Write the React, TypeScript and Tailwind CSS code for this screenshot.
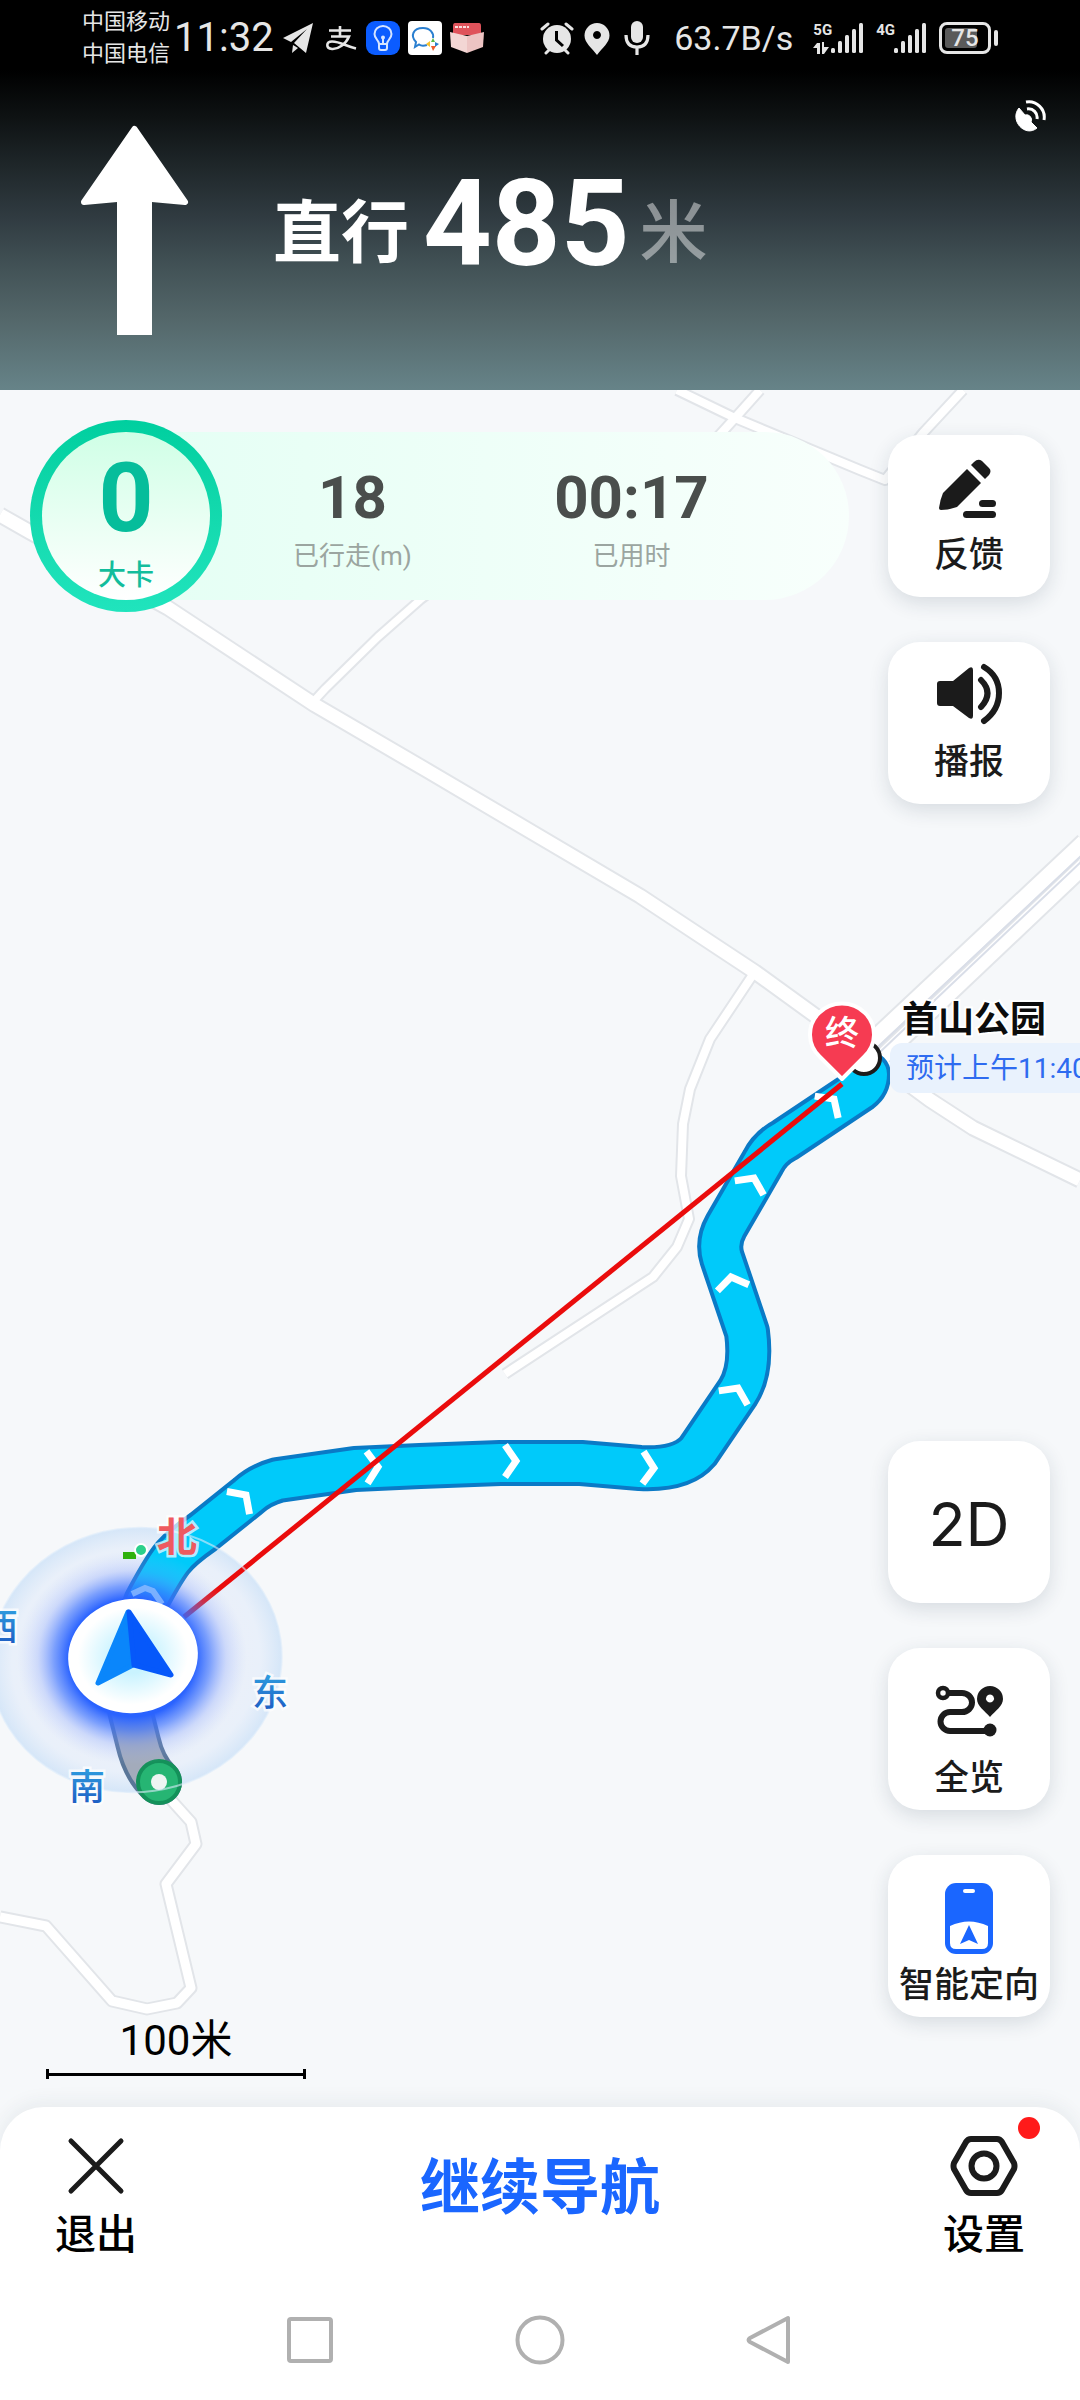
import type { ReactNode } from "react";

const ROADS = [
  { d: "M0 515 L30 532 L168 608 L315 705 L428 771 L640 896 L755 972 L842 1035 L930 1100 L973 1128 L1080 1180", w: 13 },
  { d: "M312 703 L325 689 L378 637 L420 600 L500 540", w: 7 },
  { d: "M677 390 L735 418 L860 470 L885 480 L923 433 L963 390", w: 8 },
  { d: "M760 390 L735 418 L715 440", w: 8 },
  { d: "M752 976 L710 1039 L690 1089 L683 1124 L681 1176 L689 1219 L677 1247 L653 1277 L505 1374", w: 8 },
  { d: "M159 1782 L173 1802 L191 1822 L196 1844 L166 1884 L191 1988 L177 2003 L147 2009 L112 2001 L46 1926 L0 1917", w: 9 },
  { d: "M862 1050 L1084 842", w: 15 },
  { d: "M877 1062 L1084 866", w: 15 },
];

const ROUTE =
  "M130 1650 L146 1602 Q162 1572 171 1560 T203 1532 L248 1496 Q260 1485 278 1480 L355 1469 L420 1466 L500 1463 L581 1463 L640 1468 Q682 1470 698 1451 L738 1392 Q752 1370 747 1332 L722 1258 Q717 1242 726 1226 L763 1162 Q770 1148 785 1140 L860 1090 Q868 1084 868 1074";
const PASSED = "M127 1690 L130 1710 L138 1742 Q144 1768 159 1782";

// tip x, tip y, heading
const CHEVRONS = [
  [246, 1495, 45],
  [378, 1467, 88],
  [516, 1461, 90],
  [654, 1468, 92],
  [738, 1388, 26],
  [731, 1277, -11],
  [754, 1178, 26],
  [834, 1099, 43],
];

function StatusBar() {
  return (
    <div className="flex h-19 items-center justify-between px-[82px] text-[#e6e6e6]">
      <div className="flex items-center gap-2">
        <div className="text-[22px] leading-8">
          <div>中国移动</div>
          <div>中国电信</div>
        </div>
        <time className="-ml-1 text-[40px] leading-12">11:32</time>
        <svg className="h-[34px] w-[34px]" viewBox="0 0 34 34">
          <path d="M31 2 L1 17 L9 21 L25 8 L12 22 L24 32 Z" fill="currentColor" />
          <path d="M11 24 L10 32 L16 27 Z" fill="currentColor" />
        </svg>
        <svg className="h-[34px] w-[34px]" viewBox="0 0 34 34" fill="none" stroke="currentColor" strokeWidth="2.6">
          <path d="M5 9.500 H27 M16 5 V15.500 M7 15.500 H25 C22 23 14 28.500 8 28 C1.500 27.500 2 20.500 8 20.500 C16 20.500 22 25 32 27.500" />
        </svg>
        <svg className="h-[34px] w-[34px]" viewBox="0 0 34 34">
          <rect width="34" height="34" rx="9" fill="#0b5cff" />
          <g fill="none" stroke="#d5e4ff" strokeWidth="2">
            <path d="M13 23 C13 19 8.500 18 8.500 13 A8.500 8 0 0 1 25.500 13 C25.500 18 21 19 21 23 Z" />
            <path d="M13 23 V27 Q13 29 15 29 H19 Q21 29 21 27 V23 M17 23 V17" />
          </g>
          <circle cx="17" cy="16.500" r="2" fill="#d5e4ff" />
        </svg>
        <svg className="h-[34px] w-[34px]" viewBox="0 0 34 34">
          <rect width="34" height="34" rx="4" fill="#fff" />
          <path d="M19 24 C16 25 13 25 11 23.500 L7 26 L8 21 C2 15 5 7 15 7 C22 7 26 12 25 17" fill="none" stroke="#2a7fd0" strokeWidth="2" />
          <path d="M25 17 L27 21 L23 21 Z" fill="#58b947" />
          <path d="M31 23 L27 26 L27 21 Z" fill="#2a7fd0" />
          <path d="M25 30 L23 25 L28 25 Z" fill="#ef5b2e" />
          <path d="M18 23 L22 20 L22 26 Z" fill="#f8c12c" />
        </svg>
        <svg className="h-[34px] w-[34px]" viewBox="0 0 34 34">
          <path d="M5 2 H29 Q31 2 31 5 V14 H3 V5 Q3 2 5 2" fill="#df535b" />
          <path d="M0 11 L17 15 V32 L1 26 Z" fill="#f3d6d4" />
          <path d="M34 11 L17 15 V32 L33 26 Z" fill="#edc4c3" />
          <path d="M5 6 h14" stroke="#fbdcdc" strokeWidth="2" strokeDasharray="3 1" />
        </svg>
      </div>

      <div className="flex items-center">
        <div className="flex gap-1.5">
          <svg className="h-[34px] w-[34px]" viewBox="0 0 34 34">
            <circle cx="17" cy="18" r="14" fill="currentColor" />
            <path d="M2 8 L8 3 M32 8 L26 3 M6 32 L10 28 M28 32 L24 28" stroke="currentColor" strokeWidth="3" strokeLinecap="round" />
            <path d="M16.500 10 V19 L23 25" fill="none" stroke="#000" strokeWidth="3" />
          </svg>
          <svg className="h-[34px] w-[34px]" viewBox="0 0 34 34">
            <path fillRule="evenodd" d="M17 2 A12.500 12.500 0 0 1 29.500 14.500 C29.500 22 22 27 17 34 C12 27 4.500 22 4.500 14.500 A12.500 12.500 0 0 1 17 2 M17 10 a4 4 0 1 0 0.010 0" fill="currentColor" />
          </svg>
          <svg className="h-[34px] w-[34px]" viewBox="0 0 34 34">
            <rect x="11" y="0" width="12" height="22" rx="6" fill="currentColor" />
            <path d="M6 14 Q6 26 17 26 Q28 26 28 14 M17 26 V34" fill="none" stroke="currentColor" strokeWidth="3.200" />
          </svg>
        </div>
        <span className="mr-2 ml-5 text-[34px] leading-10">63.7B/s</span>
        <Signal label="5G" active />
        <Signal label="4G" />
        <div className="ml-3 flex items-center gap-[3px]">
          <div className="relative flex h-8 w-[52px] items-center justify-center rounded-[8px] border-3 border-[#e6e6e6]">
            <div className="absolute inset-y-[3px] left-[3px] w-8 rounded-[3px] bg-[#5a5a5a]" />
            <span className="relative text-2xl leading-6 font-medium">75</span>
          </div>
          <div className="h-4 w-1 rounded-sm bg-[#e6e6e6]" />
        </div>
      </div>
    </div>
  );
}

function Signal({ label, active }: { label: string; active?: boolean }) {
  return (
    <div className="ml-3 flex h-8 items-start">
      <div className="flex flex-col">
        <span className="text-[15px] leading-4 font-bold">{label}</span>
        {active && (
          <svg className="mt-1 h-3 w-4" viewBox="0 0 16 12" fill="currentColor">
            <path d="M0 6 L4 1 H7 V12 H4 V6 Z M9 0 H11 V5 H16 L11 12 H9 Z" />
          </svg>
        )}
      </div>
      <svg className="-ml-px h-8 w-[33px]" viewBox="0 0 33 32" fill="currentColor">
        <rect x="0" y="26" width="4" height="5" rx="1.500" />
        <rect x="7" y="19" width="4" height="12" rx="1.500" />
        <rect x="14" y="13" width="4" height="18" rx="1.500" />
        <rect x="21" y="7" width="4" height="24" rx="1.500" />
        <rect x="28" y="1" width="4" height="30" rx="1.500" />
      </svg>
    </div>
  );
}

function MapCanvas() {
  return (
    <svg
      className="absolute inset-0 h-full w-full"
      viewBox="0 390 1080 1757"
      preserveAspectRatio="xMidYMid slice"
      role="img"
      aria-label="地图"
    >
      <defs>
        <radialGradient id="halo">
          <stop offset="0.500" stopColor="#e6ebf8" stopOpacity="0.600" />
          <stop offset="0.850" stopColor="#e6eefa" stopOpacity="0.800" />
          <stop offset="1" stopColor="#d5e6f8" />
        </radialGradient>
        <radialGradient id="glow">
          <stop offset="0.550" stopColor="#2a63ff" />
          <stop offset="0.680" stopColor="#3f74ff" stopOpacity="0.650" />
          <stop offset="0.820" stopColor="#7294ff" stopOpacity="0.250" />
          <stop offset="1" stopColor="#a9c0ff" stopOpacity="0" />
        </radialGradient>
        <radialGradient id="disc">
          <stop offset="0.300" stopColor="#c9f3ff" />
          <stop offset="0.850" stopColor="#fff" />
        </radialGradient>
        <linearGradient id="compass" x1="0" y1="0" x2="0" y2="1">
          <stop offset="0" stopColor="#2f9fe0" />
          <stop offset="1" stopColor="#1c55c0" />
        </linearGradient>
      </defs>

      <g fill="none" strokeLinejoin="round">
        {ROADS.map((r) => (
          <path key={r.d} d={r.d} stroke="#e2e5e9" strokeWidth={r.w + 4} />
        ))}
        {ROADS.map((r) => (
          <path key={r.d} d={r.d} stroke="#fff" strokeWidth={r.w} />
        ))}
      </g>
      <path d="M877 1048 L1084 853" stroke="#d9dee8" strokeWidth="2" />
      <path d="M880 1052 L1084 859" stroke="#d9dee8" strokeWidth="2" />

      <ellipse cx="136" cy="1660" rx="146" ry="132" transform="rotate(-8 136 1660)" fill="url(#halo)" />

      {/* route */}
      <g fill="none" strokeLinecap="round" strokeLinejoin="round">
        <path d={PASSED} stroke="#5a7698" strokeWidth="46" />
        <path d={PASSED} stroke="#a3abbb" strokeWidth="38" />
        <path d={ROUTE} stroke="#0a7ac6" strokeWidth="46" />
        <path d={ROUTE} stroke="#00cafa" strokeWidth="38" />
      </g>
      {CHEVRONS.map(([x, y, a]) => (
        <path
          key={x}
          d="M-16 11 L0 0 L16 11"
          transform={`translate(${x} ${y}) rotate(${a})`}
          fill="none"
          stroke="#fff"
          strokeWidth="7"
        />
      ))}

      <circle cx="159" cy="1782" r="21" fill="#26b573" stroke="#14915a" strokeWidth="4" />
      <circle cx="159" cy="1782" r="8" fill="#eef5f2" />
      <path d="M184 1617 L842 1084" stroke="#ea0c0c" strokeWidth="5" />

      {/* current position */}
      <ellipse cx="136" cy="1660" rx="146" ry="132" transform="rotate(-8 136 1660)" fill="none" stroke="#dcebfa" strokeWidth="2" opacity="0.600" />
      <ellipse cx="132" cy="1658" rx="115" ry="107" fill="url(#glow)" />
      <path d="M123 1552 h13 v7 h-13 Z" fill="#2fb10d" />
      <circle cx="141" cy="1550" r="6" fill="#2bd08b" stroke="#fff" strokeWidth="2" />
      <path d="M132 1594 L145 1588 L153 1591 L162 1604" fill="none" stroke="#8fbcff" strokeWidth="6" opacity="0.800" />
      <ellipse cx="133" cy="1656" rx="65" ry="57" transform="rotate(-8 133 1656)" fill="url(#disc)" />
      <g strokeLinejoin="round" strokeWidth="5">
        <path d="M128 1612 L98 1683 L133 1665 Z" fill="#0a86fb" stroke="#0a86fb" />
        <path d="M129 1612 L171 1675 L134 1665 Z" fill="#0658fa" stroke="#0658fa" />
      </g>

      <g textAnchor="middle" fontSize="36" fontWeight="500" fill="url(#compass)" stroke="#fff" strokeOpacity="0.700" strokeWidth="5" paintOrder="stroke">
        <text x="0" y="1640">西</text>
        <text x="270" y="1706">东</text>
        <text x="87" y="1800">南</text>
        <text x="177" y="1551" fontSize="40" fontWeight="700" fill="#ee5a60">北</text>
      </g>

      {/* destination */}
      <circle cx="864" cy="1058" r="16" fill="#fff" stroke="#1c1c1c" strokeWidth="4" />
      <path
        d="M842 1079 L820 1057 A32 31 0 1 1 864 1057 Z"
        fill="#f63b52"
        stroke="#fff"
        strokeWidth="4"
        strokeLinejoin="round"
      />
      <text x="842" y="1045" textAnchor="middle" fontSize="34" fontWeight="500" fill="#fff">终</text>
      <text x="902" y="1032" fontSize="36" fontWeight="700" fill="#0c0c0c" stroke="#fff" strokeWidth="4" paintOrder="stroke">
        首山公园
      </text>
      <rect x="890" y="1043" width="260" height="50" rx="12" fill="#e9f2fd" />
      <text x="906" y="1078" fontSize="28" fill="#2e6bf0">预计上午11:40</text>
    </svg>
  );
}

function MapButton({ label, className = "", children }: { label?: string; className?: string; children: ReactNode }) {
  return (
    <button
      type="button"
      className={`flex h-[162px] w-[162px] flex-col items-center justify-center gap-4 rounded-[32px] bg-white text-[#1b1b1b] shadow-[0_6px_20px_rgba(30,50,70,0.14)] ${className}`}
    >
      {children}
      {label && <span className="text-[35px] leading-10 font-medium whitespace-nowrap">{label}</span>}
    </button>
  );
}

function Stat({ value, label }: { value: string; label: string }) {
  return (
    <div className="flex flex-col items-center">
      <span className="text-[60px] leading-16 font-bold text-[#4a4e4c]">{value}</span>
      <span className="mt-2 text-[26px] leading-9 text-[#9ba5a0]">{label}</span>
    </div>
  );
}

export default function App() {
  return (
    <div className="flex min-h-screen flex-col overflow-x-hidden bg-[#f6f8fa] font-[Roboto,'Noto_Sans_CJK_SC',sans-serif]">
      <header className="h-[390px] bg-[linear-gradient(to_bottom,#000_70px,#0e1213_117px,#1f272a_167px,#303b41_217px,#425256_267px,#536669_317px,#668388_389px)]">
        <StatusBar />
        <div className="relative flex items-start pt-12 pl-20 text-white">
          <svg className="h-[214px] w-[109px]" viewBox="0 0 109 214" fill="currentColor" stroke="currentColor" strokeLinejoin="round">
            <path d="M54.500 5 L105 78 L72 75 L72 211 L37 211 L37 75 L4 78 Z" strokeWidth="0" />
            <path d="M54.500 5 L105 78 L72 75 L37 75 L4 78 Z" strokeWidth="6" />
          </svg>
          <h1 className="mt-10 ml-21 flex items-end font-bold">
            <span className="mb-4 text-[68px] leading-none">直行</span>
            <span className="ml-3.5 text-[120px] leading-none">485</span>
            <span className="mb-4 ml-2.5 text-[68px] leading-none font-medium text-white/45">米</span>
          </h1>
          <svg className="absolute top-6 right-[34px] h-8 w-8" viewBox="0 0 32 32">
            <path d="M5 8 C-5 20 11 38 23 28 L17 22 A5 5 0 0 0 11 15 Z" fill="#fff" stroke="#fff" strokeWidth="1" strokeLinejoin="round" />
            <path d="M12 2 C22 0 32 9 30 20 M13 9 C19 8 24 13 23 19" fill="none" stroke="#fff" strokeWidth="3" />
          </svg>
        </div>
      </header>

      <main className="relative flex flex-1 justify-between gap-[39px] overflow-hidden">
        <MapCanvas />

        <div className="relative flex min-w-0 flex-1 flex-col justify-between pt-[30px] pb-[68px] pl-[30px]">
          <section className="flex items-center">
            <div className="z-10 h-48 w-48 shrink-0 rounded-full bg-linear-to-b from-[#00cf9f] to-[#20e4bd] p-3">
              <div className="flex h-full flex-col items-center rounded-full bg-linear-to-b from-[#cfffe6] to-white">
                <span className="mt-4 text-[96px] leading-[100px] font-bold text-[#06bd9b]">0</span>
                <span className="mt-3.5 text-[28px] leading-7 font-medium text-[#12bd9c]">大卡</span>
              </div>
            </div>
            <div className="-ml-24 flex h-[168px] flex-1 items-center rounded-r-full bg-linear-to-r from-[#e4fff4] to-[#f8fffc] pt-2 pr-[78px] pl-[87px]">
              <div className="grid flex-1 grid-cols-2">
                <Stat value="18" label="已行走(m)" />
                <Stat value="00:17" label="已用时" />
              </div>
            </div>
          </section>

          <div className="ml-4 flex w-[260px] flex-col items-center text-[42px] leading-12 text-black">
            100米
            <div className="mt-1 flex h-2.5 w-full items-center border-x-3 border-black">
              <div className="h-[3px] w-full bg-black" />
            </div>
          </div>
        </div>

        <aside className="relative flex flex-col justify-between pt-[45px] pr-[30px] pb-[130px]">
          <div className="flex flex-col gap-[45px]">
            <MapButton label="反馈">
              <svg className="h-16 w-16" viewBox="2 0 64 64" fill="currentColor">
                <path d="M32 13 L46 27 L22 51 Q14 54 6 54 Q4 54 4 52 Q5 44 8 37 Z" />
                <path d="M36 9 L39 6 Q43 2 47 5 L54 12 Q57 15 54 19 L50 23 Z" />
                <rect x="44" y="44" width="17" height="7" rx="3.500" />
                <rect x="28" y="55" width="33" height="7" rx="3.500" />
              </svg>
            </MapButton>
            <MapButton label="播报">
              <svg className="h-16 w-[66px]" viewBox="0 -1 66 64">
                <path d="M1 20 Q1 17 4 17 H17 L33 4 Q37 2 37 6 V52 Q37 56 33 54 L17 42 H4 Q1 42 1 39 Z" fill="currentColor" />
                <path d="M45 16 Q58 29 45 43 M48 3 Q63 12 63 29 Q63 46 48 57" fill="none" stroke="currentColor" strokeWidth="6" strokeLinecap="round" />
              </svg>
            </MapButton>
          </div>
          <div className="flex flex-col gap-[45px]">
            <MapButton className="pt-1">
              <span className="font-[Inter,sans-serif] text-[61px] leading-none">2D</span>
            </MapButton>
            <MapButton label="全览" className="pt-5">
              <svg className="h-16 w-[68px]" viewBox="0 -1 68 64" fill="none" stroke="currentColor" strokeWidth="6">
                <circle cx="8" cy="13" r="5" strokeWidth="4.500" />
                <path d="M14 13 H27 A10 9.500 0 0 1 27 32 H15 A9.500 9.500 0 0 0 15 51 H54" />
                <circle cx="55" cy="50" r="6.500" fill="currentColor" stroke="none" />
                <path fillRule="evenodd" d="M55 6 A13 13 0 0 1 68 19 C68 26 60 31 55 37 C50 31 42 26 42 19 A13 13 0 0 1 55 6 M55 14.500 a4 4 0 1 0 0.010 0" fill="currentColor" stroke="none" />
              </svg>
            </MapButton>
            <MapButton label="智能定向" className="pt-5">
              <svg className="-my-1 h-18 w-12" viewBox="0 -1 48 72">
                <rect width="48" height="71" rx="11" fill="#1a66ff" />
                <rect x="18" y="6" width="12" height="4" rx="2" fill="#fff" />
                <path d="M5 43 Q24 34 43 43 V60 Q43 66 37 66 H11 Q5 66 5 60 Z" fill="#fff" />
                <path d="M24 42 L33 61 L24 57 L15 61 Z" fill="#1a66ff" />
              </svg>
            </MapButton>
          </div>
        </aside>
      </main>

      <footer className="relative -mt-10 h-[293px] rounded-t-[44px] bg-white shadow-[0_-4px_20px_rgba(30,50,70,0.07)]">
        <div className="flex justify-between px-[54px] pt-6 text-black">
          <button type="button" className="flex w-[84px] flex-col items-center gap-2.5 text-[41px] leading-12 font-medium">
            <svg className="h-[70px] w-[70px]" viewBox="0 0 70 70" stroke="#1b1b1b" strokeWidth="5" strokeLinecap="round">
              <path d="M10 10 L60 60 M60 10 L10 60" />
            </svg>
            退出
          </button>
          <button type="button" className="mt-7 h-[60px] text-[60px] leading-none font-bold text-[#1a66ff]">
            继续导航
          </button>
          <button type="button" className="relative flex w-[84px] flex-col items-center gap-2.5 text-[41px] leading-12 font-medium">
            <svg className="h-[70px] w-[70px]" viewBox="0 0 70 70" fill="none" stroke="#1b1b1b" strokeWidth="6">
              <path d="M22 8 H48 Q51 8 53 11 L65 32 Q66 35 65 38 L53 59 Q51 62 48 62 H22 Q19 62 17 59 L5 38 Q4 35 5 32 L17 11 Q19 8 22 8 Z" />
              <circle cx="35" cy="35" r="12.500" />
            </svg>
            设置
            <span className="absolute -top-3.5 -right-3.5 h-[22px] w-[22px] rounded-full bg-[#ff1a1a]" />
          </button>
        </div>
        <nav className="mt-14 flex justify-center gap-[180px]">
          <button type="button" aria-label="最近任务">
            <svg className="h-[50px] w-[50px]" viewBox="0 0 50 50" fill="none" stroke="#b0b0b0" strokeWidth="4">
              <rect x="4" y="4" width="42" height="42" rx="2" />
            </svg>
          </button>
          <button type="button" aria-label="主页">
            <svg className="h-[50px] w-[50px]" viewBox="0 0 50 50" fill="none" stroke="#b0b0b0" strokeWidth="4">
              <circle cx="25" cy="25" r="22.500" />
            </svg>
          </button>
          <button type="button" aria-label="返回">
            <svg className="h-[50px] w-[50px]" viewBox="0 0 50 50" fill="none" stroke="#b0b0b0" strokeWidth="4" strokeLinejoin="round">
              <path d="M43 3 V47 L5 27 Q2 25 5 23 Z" />
            </svg>
          </button>
        </nav>
      </footer>
    </div>
  );
}
